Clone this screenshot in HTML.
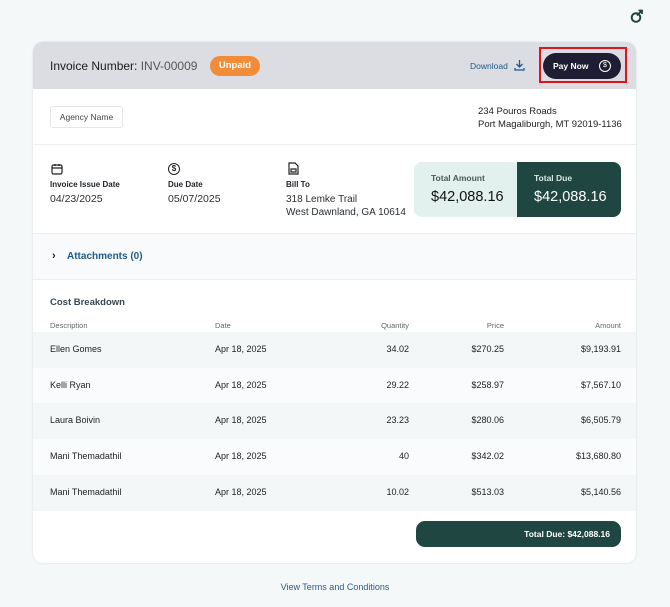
<!DOCTYPE html>
<html><head><style>
*{box-sizing:border-box;margin:0;padding:0}
body{width:670px;height:607px;background:#f4f8f8;font-family:"Liberation Sans",sans-serif;color:#1f2328;position:relative;overflow:hidden}
.abs{position:absolute}
.card{position:absolute;left:33px;top:42px;width:603px;height:521px;background:#fff;border-radius:10px;box-shadow:0 0 2px rgba(0,0,0,.12);overflow:hidden}
.hdr{position:absolute;left:0;top:0;width:603px;height:47px;background:#dcdde2}
.lbl{font-size:8px;font-weight:bold;color:#1f2328}
.val{font-size:10.5px;color:#2a2f33}
.row{position:absolute;left:0;width:603px;height:36px;font-size:9px;color:#222}
.row span{position:absolute;top:12px}
.th{position:absolute;top:279px;font-size:7.5px;color:#666}
</style></head><body>
<svg class="abs" style="left:630px;top:9px" width="14" height="14" viewBox="0 0 14 14"><circle cx="6" cy="8.5" r="4.3" fill="none" stroke="#1f4640" stroke-width="2"/><path d="M7 6.5 L12 1.5 M8.5 1.5 H12 V5" stroke="#1f4640" stroke-width="1.8" fill="none"/></svg>
<div class="card">
 <div class="hdr"></div>
 <div class="abs" style="left:17px;top:17px;font-size:12px;color:#1a1a1a">Invoice Number: <span style="color:#555">INV-00009</span></div>
 <div class="abs" style="left:177px;top:14px;width:50px;height:20px;border-radius:10px;background:#f28c38;color:#fff;font-size:9.5px;font-weight:bold;text-align:center;line-height:20px">Unpaid</div>
 <div class="abs" style="left:437px;top:19px;font-size:8.5px;color:#1f5a8a">Download</div>
 <svg class="abs" style="left:481px;top:17px" width="11" height="12" viewBox="0 0 11 12"><path d="M5.5 1V8M2.5 5L5.5 8L8.5 5M1 9V11H10V9" stroke="#1f5a8a" stroke-width="1.3" fill="none"/></svg>
 <div class="abs" style="left:506px;top:5px;width:88px;height:36px;border:2.5px solid #e0141c"></div>
 <div class="abs" style="left:510px;top:11px;width:78px;height:26px;border-radius:13px;background:#1f1d33;color:#fff;font-size:8.5px;font-weight:bold;line-height:26px;padding-left:10px">Pay Now</div>
 <div class="abs" style="left:566px;top:18px;width:12px;height:12px;border:1.2px solid #fff;border-radius:50%;color:#fff;font-size:7px;text-align:center;line-height:10px">$</div>
 <div class="abs" style="left:17px;top:64px;width:73px;height:22px;border:1px solid #e3e6ea;border-radius:3px;font-size:8.5px;color:#444;text-align:center;line-height:20px">Agency Name</div>
 <div class="abs" style="left:445px;top:63px;font-size:9.5px;line-height:13px;color:#222">234 Pouros Roads<br>Port Magaliburgh, MT 92019-1136</div>
 <div class="abs" style="left:0;top:102px;width:603px;height:1px;background:#eceef0"></div>
 <svg class="abs" style="left:18px;top:121px" width="12" height="12" viewBox="0 0 12 12"><rect x="1" y="2" width="10" height="9" rx="1.5" fill="none" stroke="#222" stroke-width="1.2"/><path d="M1 5H11M4 1V3M8 1V3" stroke="#222" stroke-width="1.2"/></svg>
 <div class="abs" style="left:135px;top:121px;width:12px;height:12px;border:1.2px solid #222;border-radius:50%;font-size:8px;text-align:center;line-height:10px;font-weight:bold">$</div>
 <svg class="abs" style="left:255px;top:120px" width="11" height="13" viewBox="0 0 11 13"><path d="M1 1H7L10 4V12H1Z M3 7H8V10H3Z" fill="none" stroke="#222" stroke-width="1.2"/></svg>
 <div class="abs lbl" style="left:17px;top:138px">Invoice Issue Date</div>
 <div class="abs lbl" style="left:135px;top:138px">Due Date</div>
 <div class="abs lbl" style="left:253px;top:138px">Bill To</div>
 <div class="abs val" style="left:17px;top:151px">04/23/2025</div>
 <div class="abs val" style="left:135px;top:151px">05/07/2025</div>
 <div class="abs val" style="left:253px;top:151px;line-height:13px;font-size:10px">318 Lemke Trail<br>West Dawnland, GA 10614</div>
 <div class="abs" style="left:381px;top:120px;width:207px;height:55px;border-radius:8px;background:#e2f0ee;overflow:hidden">
  <div class="abs" style="left:103px;top:0;width:104px;height:55px;background:#1f4640"></div>
  <div class="abs" style="left:17px;top:11px;font-size:8.5px;font-weight:bold;color:#4a5c5a">Total Amount</div>
  <div class="abs" style="left:17px;top:27px;font-size:14.5px;color:#111">$42,088.16</div>
  <div class="abs" style="left:120px;top:11px;font-size:8.5px;font-weight:bold;color:#d8e6e3">Total Due</div>
  <div class="abs" style="left:120px;top:27px;font-size:14.5px;color:#fff">$42,088.16</div>
 </div>
 <div class="abs" style="left:0;top:191px;width:603px;height:47px;background:#f8fafb;border-top:1px solid #eceef0;border-bottom:1px solid #eceef0"></div>
 <div class="abs" style="left:19px;top:208px;font-size:11px;font-weight:bold;color:#222">›</div>
 <div class="abs" style="left:34px;top:209px;font-size:10px;font-weight:bold;color:#1f5a8a">Attachments (0)</div>
 <div class="abs" style="left:17px;top:255px;font-size:9.5px;font-weight:bold;color:#3a4650">Cost Breakdown</div>
 <div class="th" style="left:17px">Description</div>
 <div class="th" style="left:182px">Date</div>
 <div class="th" style="right:227px">Quantity</div>
 <div class="th" style="right:132px">Price</div>
 <div class="th" style="right:15px">Amount</div>
 <div class="row" style="top:290px;background:#f3f7f8"><span style="left:17px">Ellen Gomes</span><span style="left:182px">Apr 18, 2025</span><span style="right:227px">34.02</span><span style="right:132px">$270.25</span><span style="right:15px">$9,193.91</span></div>
 <div class="row" style="top:326px;background:#fafbfc"><span style="left:17px">Kelli Ryan</span><span style="left:182px">Apr 18, 2025</span><span style="right:227px">29.22</span><span style="right:132px">$258.97</span><span style="right:15px">$7,567.10</span></div>
 <div class="row" style="top:361px;background:#f3f7f8"><span style="left:17px">Laura Boivin</span><span style="left:182px">Apr 18, 2025</span><span style="right:227px">23.23</span><span style="right:132px">$280.06</span><span style="right:15px">$6,505.79</span></div>
 <div class="row" style="top:397px;background:#fafbfc"><span style="left:17px">Mani Themadathil</span><span style="left:182px">Apr 18, 2025</span><span style="right:227px">40</span><span style="right:132px">$342.02</span><span style="right:15px">$13,680.80</span></div>
 <div class="row" style="top:433px;background:#f3f7f8"><span style="left:17px">Mani Themadathil</span><span style="left:182px">Apr 18, 2025</span><span style="right:227px">10.02</span><span style="right:132px">$513.03</span><span style="right:15px">$5,140.56</span></div>
 <div class="abs" style="left:383px;top:479px;width:205px;height:26px;border-radius:9px;background:#1f4640;color:#fff;font-size:8.5px;font-weight:bold;text-align:right;padding-right:11px;line-height:26px">Total Due: $42,088.16</div>
</div>
<div class="abs" style="left:0;width:670px;top:582px;text-align:center;font-size:9px;color:#2d5a8e">View Terms and Conditions</div>
</body></html>
